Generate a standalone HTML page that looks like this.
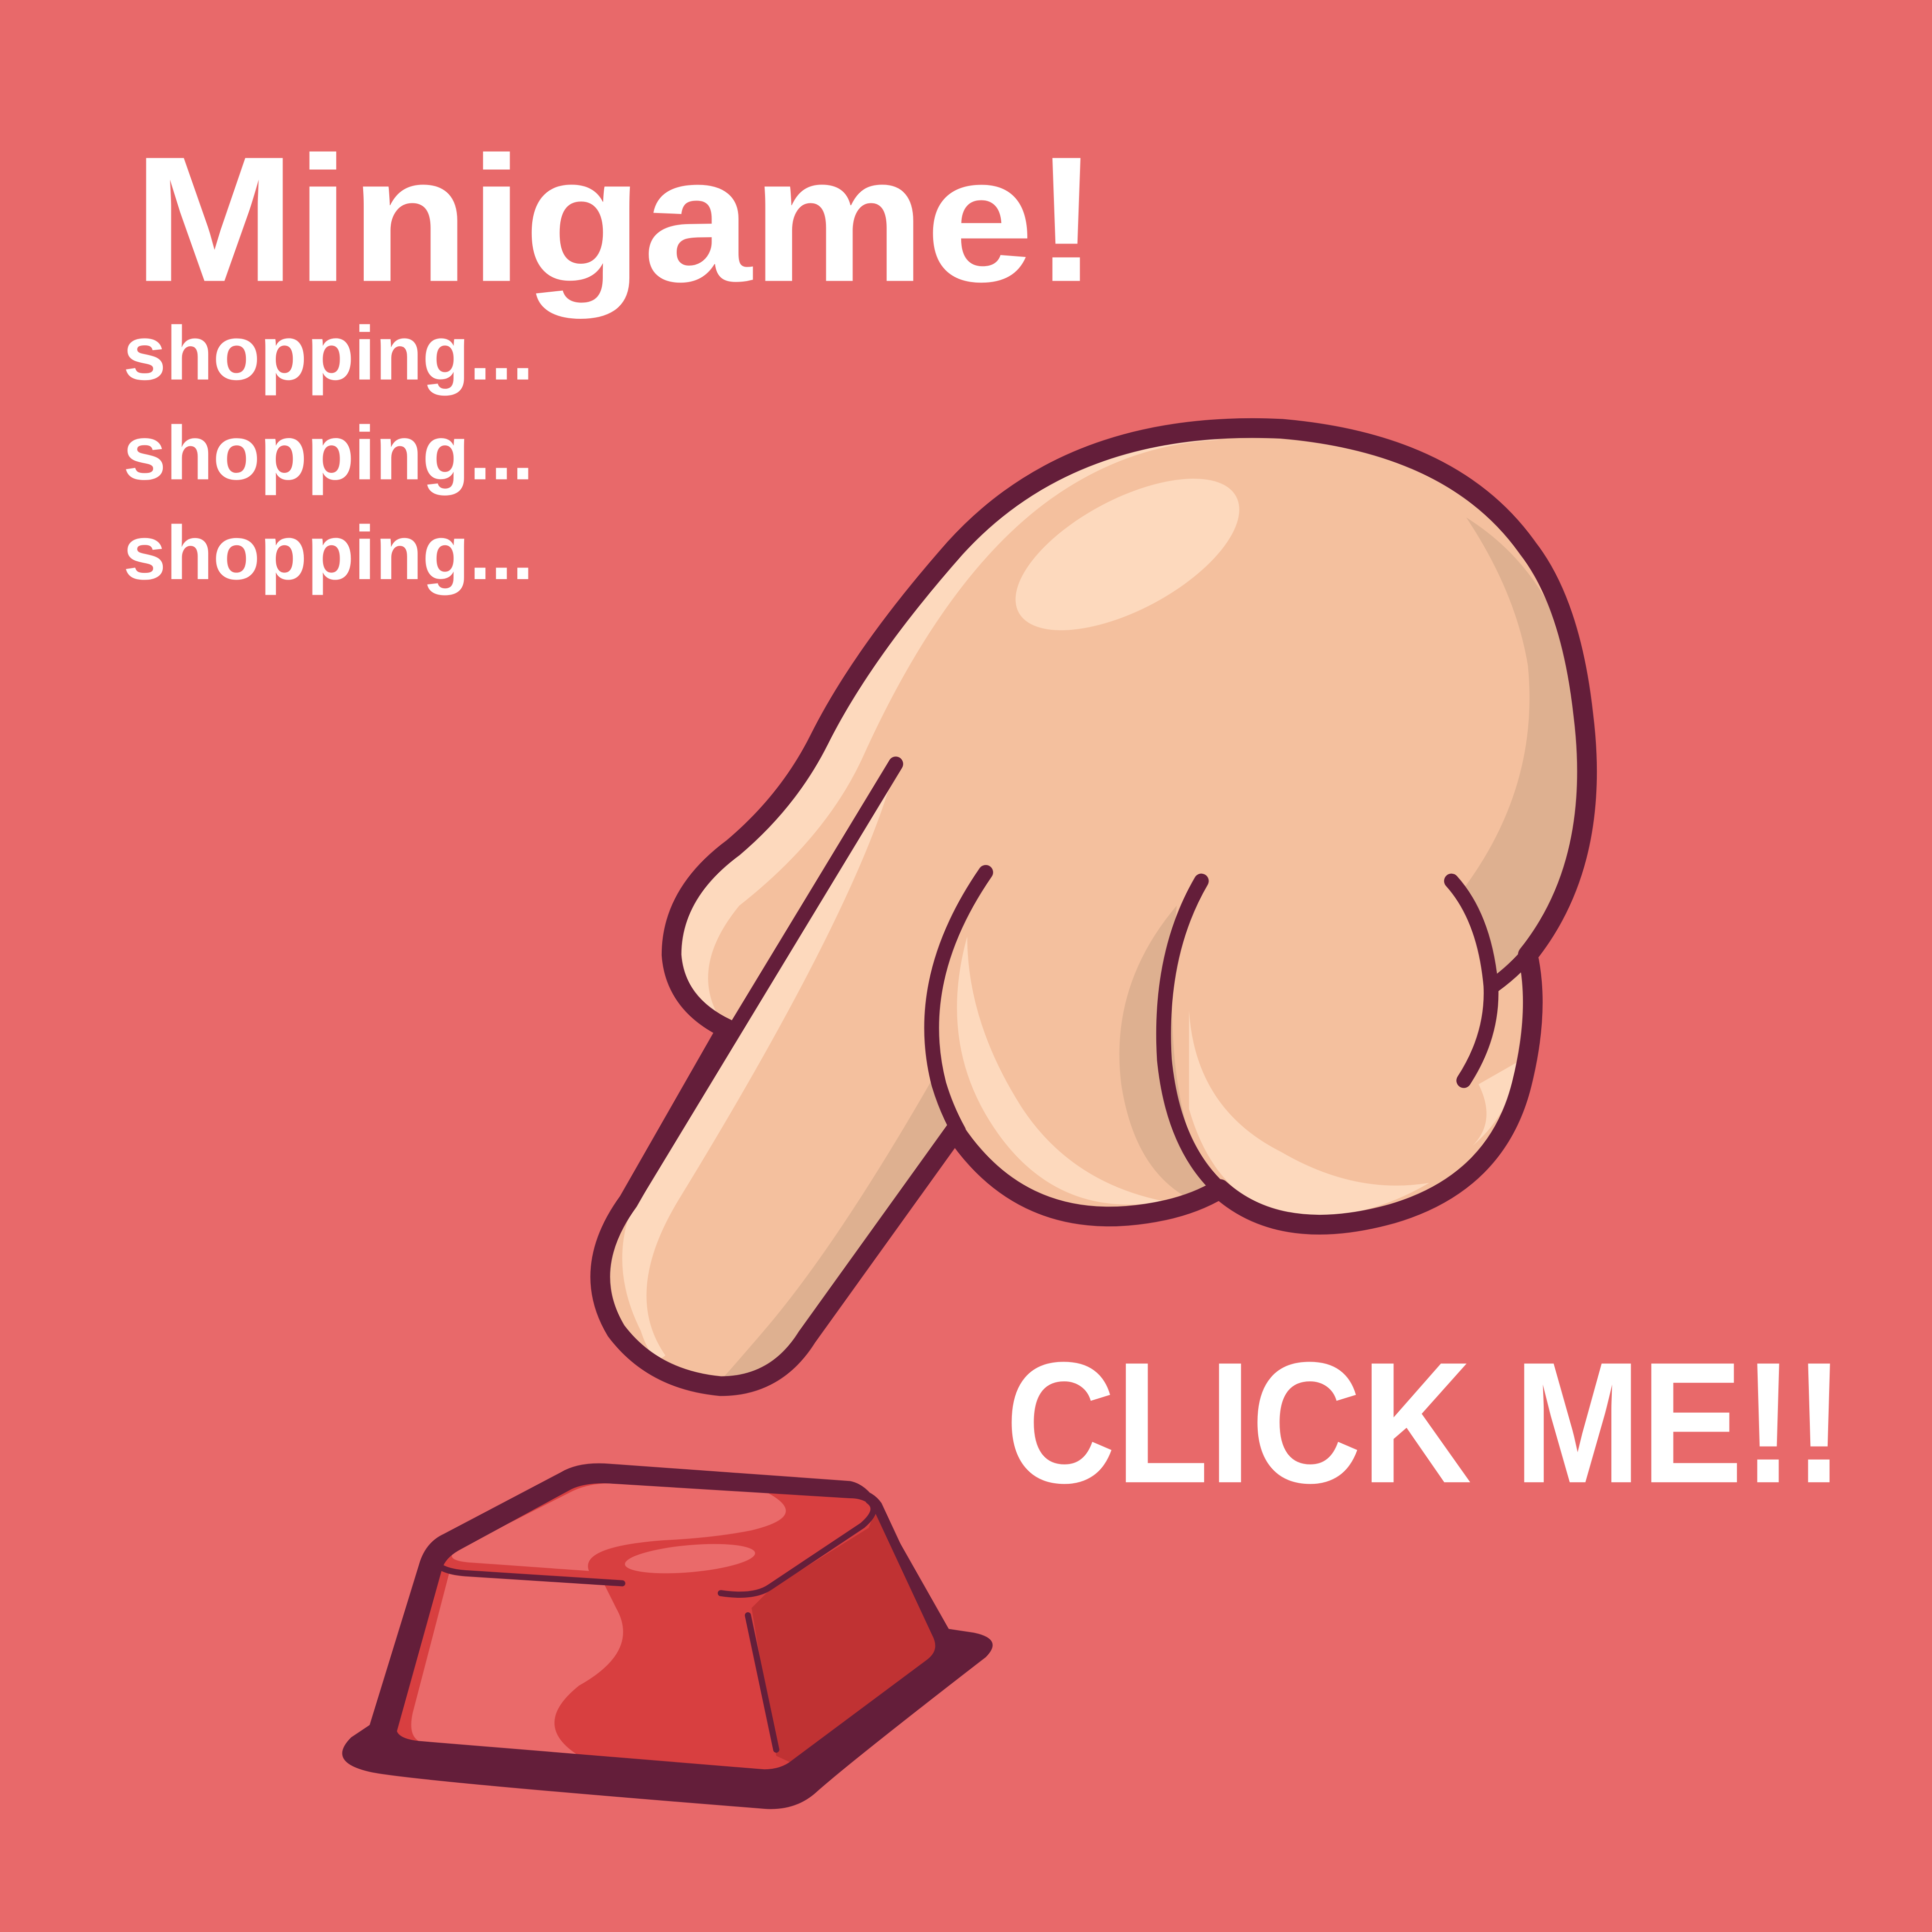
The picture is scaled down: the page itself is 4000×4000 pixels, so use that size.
<!DOCTYPE html>
<html><head><meta charset="utf-8"><style>
html,body{margin:0;padding:0;background:#E8696A;}
svg{display:block;}
text{font-family:"Liberation Sans",sans-serif;font-weight:bold;fill:#fff;}
</style></head><body>
<svg width="4000" height="4000" viewBox="0 0 1568 1568" xmlns="http://www.w3.org/2000/svg">
<rect width="1568" height="1568" fill="#E8696A"/>
<text x="108" y="228" font-size="145" textLength="784" lengthAdjust="spacingAndGlyphs">Minigame!</text>
<text x="100" y="308" font-size="62" textLength="333" lengthAdjust="spacingAndGlyphs">shopping...</text>
<text x="100" y="389" font-size="62" textLength="333" lengthAdjust="spacingAndGlyphs">shopping...</text>
<text x="100" y="470" font-size="62" textLength="333" lengthAdjust="spacingAndGlyphs">shopping...</text>
<text x="816" y="1203" font-size="140" textLength="681" lengthAdjust="spacingAndGlyphs">CLICK ME!!</text>

<!-- button -->
<path d="M300 1400 L285 1410 Q265 1430 300 1438 Q330 1445 620 1468 Q645 1470 662 1455 Q690 1430 800 1345 Q815 1330 790 1325 L770 1322 L715 1225 Q705 1205 690 1202 L495 1188 Q470 1186 455 1195 L360 1245 Q345 1252 340 1270 Z" fill="#641E3A"/>
<path d="M355 1272 L318 1405 Q320 1415 340 1417 L620 1440 Q635 1440 645 1432 L755 1350 Q768 1340 760 1325 L712 1222 Q705 1212 690 1212 L495 1200 Q475 1199 462 1205 L370 1255 Q358 1262 355 1272 Z" fill="#D83F40"/>
<path d="M712 1222 L760 1325 Q768 1340 755 1350 L645 1432 L630 1425 L610 1305 L625 1290 L705 1240 Z" fill="#C03233"/>
<path d="M365 1275 L335 1390 Q330 1412 345 1415 L470 1425 Q430 1400 470 1368 Q520 1340 500 1305 L490 1285 Z" fill="#EA6A6A"/>
<path d="M370 1258 L465 1210 Q480 1203 500 1204 L620 1210 Q660 1230 610 1242 Q580 1248 540 1250 Q470 1255 478 1275 L380 1268 Q360 1266 370 1258 Z" fill="#EA6A6A"/>
<ellipse cx="560" cy="1265" rx="53" ry="11" transform="rotate(-5 560 1265)" fill="#EA6A6A"/>
<path d="M355 1270 Q362 1276 380 1277 L505 1285 M585 1293 Q612 1297 625 1288 L700 1238 Q715 1225 705 1218 M607 1311 L630 1420" stroke="#641E3A" stroke-width="5" fill="none" stroke-linecap="round"/>
<path d="M355 1272 L318 1405 Q320 1415 340 1417 L620 1440 Q635 1440 645 1432 L755 1350 Q768 1340 760 1325 L712 1222 Q705 1212 690 1212 L495 1200 Q475 1199 462 1205 L370 1255 Q358 1262 355 1272 Z" fill="none" stroke="#641E3A" stroke-width="8"/>

<!-- hand -->
<path id="hand" d="M590 835 L510 975 Q470 1030 500 1080 Q530 1120 585 1125 Q630 1125 655 1085 L775 918 Q830 1000 930 985 Q965 980 990 965 Q1040 1010 1130 985 Q1215 960 1235 880 Q1250 820 1240 775 Q1300 700 1285 580 Q1275 490 1240 445 Q1180 360 1040 348 Q870 340 775 445 Q700 530 665 600 Q640 650 595 688 Q545 725 545 775 Q548 815 590 835 Z" fill="#F4C09E"/>
<path d="M590 835 Q555 790 600 735 Q670 680 700 615 Q770 460 860 400 Q920 360 990 357 Q870 340 775 445 Q700 530 665 600 Q640 650 595 688 Q545 725 545 775 Q548 815 590 835 Z" fill="#FDD9BD"/>
<path d="M727 620 L520 965 Q490 1020 520 1080 Q530 1110 540 1100 Q505 1050 550 975 Q700 730 727 620 Z" fill="#FDD9BD"/>
<path d="M760 870 Q680 1010 620 1080 Q590 1115 585 1120 Q630 1125 655 1085 L775 918 Z" fill="#DEB090"/>
<path d="M785 760 Q760 850 810 920 Q860 990 945 975 Q870 960 830 900 Q785 830 785 760 Z" fill="#FDD9BD"/>
<path d="M955 735 Q900 800 910 880 Q920 945 960 970 L985 960 Q940 900 955 735 Z" fill="#DEB090"/>
<path d="M965 820 Q970 900 1040 935 Q1100 970 1160 960 Q1100 995 1040 985 Q985 970 965 900 Z" fill="#FDD9BD"/>
<path d="M1190 420 Q1230 480 1240 540 Q1250 640 1185 725 L1215 790 L1240 775 Q1300 700 1285 580 Q1270 470 1190 420 Z" fill="#DEB090"/>
<path d="M1200 880 Q1215 910 1195 930 Q1225 905 1235 860 Z" fill="#FDD9BD"/>
<ellipse cx="915" cy="450" rx="100" ry="45" transform="rotate(-28 915 450)" fill="#FDD9BD"/>
<path d="M590 835 L510 975 Q470 1030 500 1080 Q530 1120 585 1125 Q630 1125 655 1085 L775 918 Q830 1000 930 985 Q965 980 990 965 Q1040 1010 1130 985 Q1215 960 1235 880 Q1250 820 1240 775 Q1300 700 1285 580 Q1275 490 1240 445 Q1180 360 1040 348 Q870 340 775 445 Q700 530 665 600 Q640 650 595 688 Q545 725 545 775 Q548 815 590 835 Z" fill="none" stroke="#641E3A" stroke-width="16" stroke-linejoin="round"/>
<g stroke="#641E3A" stroke-width="12" fill="none" stroke-linecap="round">
<path d="M727 620 L515 970"/>
<path d="M800 708 Q740 795 762 880 Q768 900 778 918"/>
<path d="M975 715 Q940 775 945 860 Q952 930 990 965"/>
<path d="M1178 715 Q1205 745 1210 800 Q1212 840 1188 877"/>
<path d="M1212 800 Q1230 787 1242 772"/>
</g>
</svg>
</body></html>
